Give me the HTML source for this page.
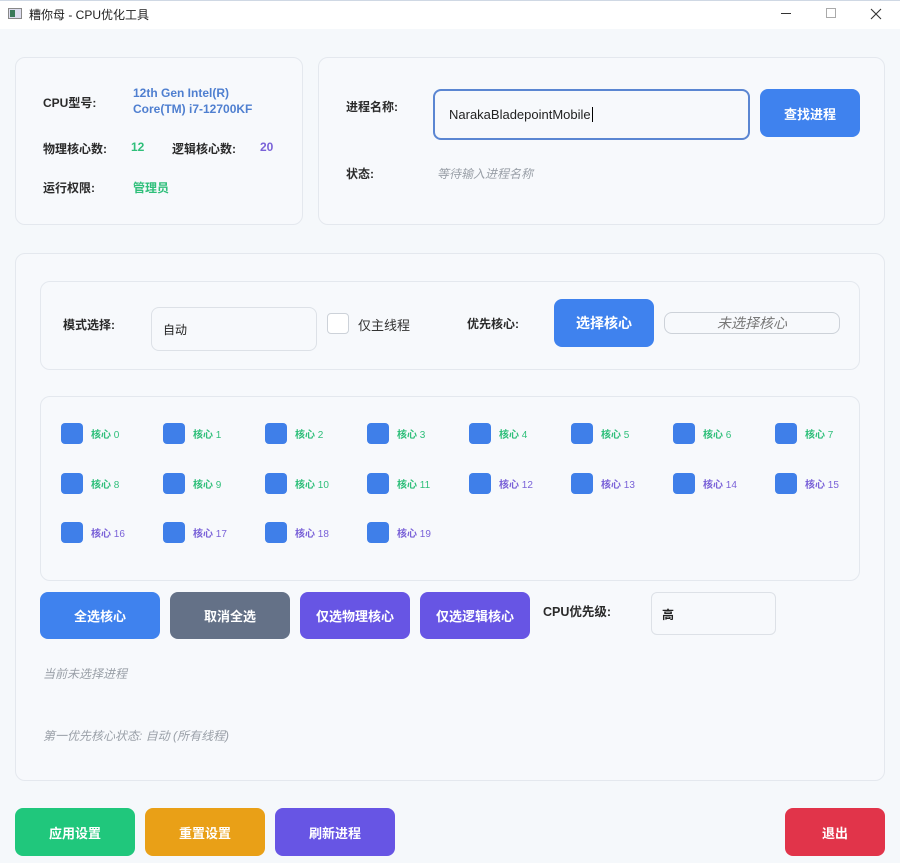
<!DOCTYPE html>
<html><head><meta charset="utf-8"><style>
*{margin:0;padding:0;box-sizing:border-box}
body{width:900px;height:863px;background:#f5f8fb;font-family:"Liberation Sans","Noto Sans CJK SC",sans-serif;position:relative;overflow:hidden;color:#222}
.a{position:absolute}
.card{position:absolute;background:#f7f9fc;border:1px solid #e4e8ee;border-radius:10px}
.lb{position:absolute;font-size:12px;font-weight:bold;color:#2a2a2a}
.btn{position:absolute;border-radius:8px;color:#fff;font-size:13px;font-weight:bold;display:flex;align-items:center;justify-content:center}
.sq{position:absolute;width:22px;height:21px;background:#3f7fe9;border-radius:4px}
.cl{position:absolute;font-size:10px;font-weight:bold}
.cl b{font-weight:normal}
.g{color:#2fbf7a}.p{color:#7a62d8}
.it{position:absolute;font-style:italic;color:#9aa0a8;font-size:12px}
</style></head><body>
<div class="a" style="left:0;top:0;width:900px;height:29px;background:#fff;border-top:1px solid #cfd8e4"></div>
<div class="a" style="left:8px;top:8px;width:14px;height:11px;border:1px solid #888;background:#dde"></div>
<div class="a" style="left:10px;top:10px;width:5px;height:7px;background:#3a7a5a"></div>
<div class="a" style="left:29px;top:6px;font-size:12px;color:#222">糟你母 - CPU优化工具</div>
<div class="a" style="left:781px;top:13px;width:10px;height:1px;background:#333"></div>
<div class="a" style="left:826px;top:8px;width:10px;height:10px;border:1px solid #aaa"></div>
<svg class="a" style="left:870px;top:8px" width="12" height="12"><path d="M1 1L11 11M11 1L1 11" stroke="#333" stroke-width="1.1"/></svg>

<div class="card" style="left:15px;top:57px;width:288px;height:168px"></div>
<div class="lb" style="left:43px;top:94px">CPU型号:</div>
<div class="a" style="left:133px;top:85px;font-size:12px;font-weight:bold;color:#4f7fd0;line-height:16px">12th Gen Intel(R)<br>Core(TM) i7-12700KF</div>
<div class="lb" style="left:43px;top:140px">物理核心数:</div>
<div class="a g" style="left:131px;top:140px;font-size:12px;font-weight:bold">12</div>
<div class="lb" style="left:172px;top:140px">逻辑核心数:</div>
<div class="a p" style="left:260px;top:140px;font-size:12px;font-weight:bold">20</div>
<div class="lb" style="left:43px;top:179px">运行权限:</div>
<div class="a g" style="left:133px;top:179px;font-size:12px;font-weight:bold">管理员</div>

<div class="card" style="left:318px;top:57px;width:567px;height:168px"></div>
<div class="lb" style="left:346px;top:98px">进程名称:</div>
<div class="a" style="left:433px;top:89px;width:317px;height:51px;border:2px solid #5b86d2;border-radius:8px;background:#f7f9fc"></div>
<div class="a" style="left:449px;top:107px;font-size:13px;color:#222">NarakaBladepointMobile<span style="border-left:1px solid #000;margin-left:1px"></span></div>
<div class="btn" style="left:760px;top:89px;width:100px;height:48px;background:#3f82ee">查找进程</div>
<div class="lb" style="left:346px;top:165px">状态:</div>
<div class="it" style="left:437px;top:165px">等待输入进程名称</div>

<div class="card" style="left:15px;top:253px;width:870px;height:528px"></div>
<div class="card" style="left:40px;top:281px;width:820px;height:89px"></div>
<div class="lb" style="left:63px;top:316px">模式选择:</div>
<div class="a" style="left:151px;top:307px;width:166px;height:44px;border:1px solid #dde1e7;border-radius:8px;background:#f7f9fc"></div>
<div class="a" style="left:163px;top:321px;font-size:12px">自动</div>
<div class="a" style="left:327px;top:313px;width:22px;height:21px;border:1px solid #cdd2d9;border-radius:4px;background:#fff"></div>
<div class="a" style="left:358px;top:315px;font-size:13px;color:#333">仅主线程</div>
<div class="lb" style="left:467px;top:315px">优先核心:</div>
<div class="btn" style="left:554px;top:299px;width:100px;height:48px;background:#3f82ee;font-size:14px">选择核心</div>
<div class="a" style="left:664px;top:312px;width:176px;height:22px;border:1px solid #cdd2d9;border-radius:8px;font-size:14px;font-style:italic;color:#777;text-align:center;line-height:20px">未选择核心</div>

<div class="card" style="left:40px;top:396px;width:820px;height:185px"></div>

<div class="btn" style="left:40px;top:592px;width:120px;height:47px;background:#3f82ee">全选核心</div>
<div class="btn" style="left:170px;top:592px;width:120px;height:47px;background:#647187">取消全选</div>
<div class="btn" style="left:300px;top:592px;width:110px;height:47px;background:#6755e4">仅选物理核心</div>
<div class="btn" style="left:420px;top:592px;width:110px;height:47px;background:#6755e4">仅选逻辑核心</div>
<div class="lb" style="left:543px;top:601px;font-size:12.5px">CPU优先级:</div>
<div class="a" style="left:651px;top:592px;width:125px;height:43px;border:1px solid #dde1e7;border-radius:6px;background:#f7f9fc"></div>
<div class="a" style="left:662px;top:606px;font-size:12px;font-weight:bold">高</div>
<div class="it" style="left:43px;top:665px">当前未选择进程</div>
<div class="it" style="left:43px;top:727px">第一优先核心状态: 自动 (所有线程)</div>

<div class="btn" style="left:15px;top:808px;width:120px;height:48px;background:#20c77c">应用设置</div>
<div class="btn" style="left:145px;top:808px;width:120px;height:48px;background:#e9a017">重置设置</div>
<div class="btn" style="left:275px;top:808px;width:120px;height:48px;background:#6755e4">刷新进程</div>
<div class="btn" style="left:785px;top:808px;width:100px;height:48px;background:#e1344a">退出</div>

<div class="sq" style="left:61px;top:423px"></div><div class="cl g" style="left:91px;top:426px">核心 <b>0</b></div>
<div class="sq" style="left:163px;top:423px"></div><div class="cl g" style="left:193px;top:426px">核心 <b>1</b></div>
<div class="sq" style="left:265px;top:423px"></div><div class="cl g" style="left:295px;top:426px">核心 <b>2</b></div>
<div class="sq" style="left:367px;top:423px"></div><div class="cl g" style="left:397px;top:426px">核心 <b>3</b></div>
<div class="sq" style="left:469px;top:423px"></div><div class="cl g" style="left:499px;top:426px">核心 <b>4</b></div>
<div class="sq" style="left:571px;top:423px"></div><div class="cl g" style="left:601px;top:426px">核心 <b>5</b></div>
<div class="sq" style="left:673px;top:423px"></div><div class="cl g" style="left:703px;top:426px">核心 <b>6</b></div>
<div class="sq" style="left:775px;top:423px"></div><div class="cl g" style="left:805px;top:426px">核心 <b>7</b></div>
<div class="sq" style="left:61px;top:473px"></div><div class="cl g" style="left:91px;top:476px">核心 <b>8</b></div>
<div class="sq" style="left:163px;top:473px"></div><div class="cl g" style="left:193px;top:476px">核心 <b>9</b></div>
<div class="sq" style="left:265px;top:473px"></div><div class="cl g" style="left:295px;top:476px">核心 <b>10</b></div>
<div class="sq" style="left:367px;top:473px"></div><div class="cl g" style="left:397px;top:476px">核心 <b>11</b></div>
<div class="sq" style="left:469px;top:473px"></div><div class="cl p" style="left:499px;top:476px">核心 <b>12</b></div>
<div class="sq" style="left:571px;top:473px"></div><div class="cl p" style="left:601px;top:476px">核心 <b>13</b></div>
<div class="sq" style="left:673px;top:473px"></div><div class="cl p" style="left:703px;top:476px">核心 <b>14</b></div>
<div class="sq" style="left:775px;top:473px"></div><div class="cl p" style="left:805px;top:476px">核心 <b>15</b></div>
<div class="sq" style="left:61px;top:522px"></div><div class="cl p" style="left:91px;top:525px">核心 <b>16</b></div>
<div class="sq" style="left:163px;top:522px"></div><div class="cl p" style="left:193px;top:525px">核心 <b>17</b></div>
<div class="sq" style="left:265px;top:522px"></div><div class="cl p" style="left:295px;top:525px">核心 <b>18</b></div>
<div class="sq" style="left:367px;top:522px"></div><div class="cl p" style="left:397px;top:525px">核心 <b>19</b></div>
</body></html>
